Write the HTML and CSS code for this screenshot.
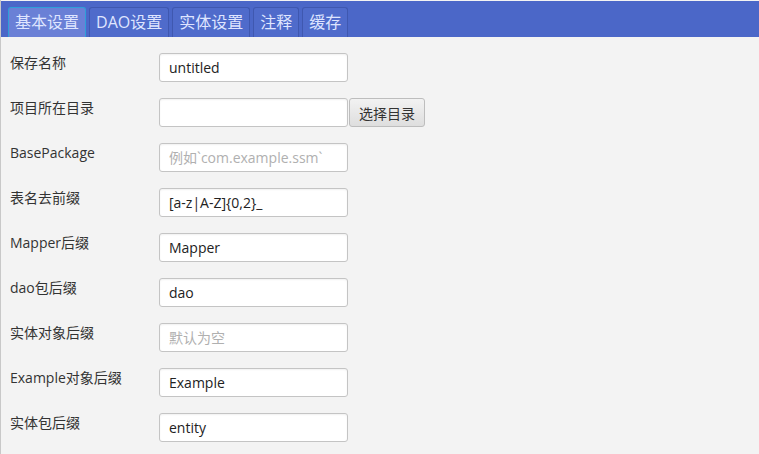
FILE: index.html
```html
<!DOCTYPE html>
<html lang="zh">
<head>
<meta charset="utf-8">
<link rel="stylesheet" href="styles.css">
</head>
<body>
<div class="app">
  <div class="tabs">
    <div class="tab active">基本设置</div>
    <div class="tab">DAO设置</div>
    <div class="tab">实体设置</div>
    <div class="tab">注释</div>
    <div class="tab">缓存</div>
  </div>
  <div class="form">
    <div class="row"><label>保存名称</label><input class="field" value="untitled"></div>
    <div class="row"><label>项目所在目录</label><input class="field" value=""><button class="btn">选择目录</button></div>
    <div class="row"><label>BasePackage</label><input class="field" placeholder="例如`com.example.ssm`"></div>
    <div class="row"><label>表名去前缀</label><input class="field" value="[a-z|A-Z]{0,2}_"></div>
    <div class="row"><label>Mapper后缀</label><input class="field" value="Mapper"></div>
    <div class="row"><label>dao包后缀</label><input class="field" value="dao"></div>
    <div class="row"><label>实体对象后缀</label><input class="field" placeholder="默认为空"></div>
    <div class="row"><label>Example对象后缀</label><input class="field" value="Example"></div>
    <div class="row"><label>实体包后缀</label><input class="field" value="entity"></div>
  </div>
</div>
</body>
</html>
```

FILE: styles.css
```css
* { box-sizing: border-box; }
html, body { margin: 0; padding: 0; }
body {
  width: 759px;
  height: 454px;
  overflow: hidden;
  background: #f3f3f3;
  font-family: "Open Sans", "Noto Sans CJK SC", sans-serif;
  color: #333;
}
.app {
  border-left: 1px solid #c8c8c8;
  height: 454px;
  padding-top: 1px;
}
.tabs {
  display: flex;
  gap: 3px;
  height: 36px;
  background: #4b67c8;
  padding: 6px 0 0 7px;
  align-items: flex-end;
}
.tab {
  height: 30px;
  padding: 0 6px;
  border: 1px solid #3f58b0;
  border-bottom: none;
  border-radius: 3px 3px 0 0;
  background: #4f6bcb;
  color: #dfe5ff;
  font-size: 16px;
  line-height: 28px;
  font-family: "Open Sans", "Noto Sans CJK SC", sans-serif;
}
.tab.active {
  background: #6a80d6;
  border: 1px solid #2f9fd8;
  border-bottom: none;
}
.form {
  padding: 16px 0 0 9px;
  display: flex;
  flex-direction: column;
  gap: 16px;
}
.row {
  display: flex;
  align-items: flex-start;
  height: 29px;
}
.row label {
  width: 149px;
  font-size: 14px;
  line-height: 18px;
  padding-top: 1px;
  color: #333;
  font-family: "Open Sans", "Noto Sans CJK SC", sans-serif;
}
.field {
  width: 189px;
  height: 29px;
  border: 1px solid #c4c4c4;
  border-radius: 3px;
  background: #fff;
  padding: 0 9px;
  font-size: 14px;
  font-family: "Open Sans", "Noto Sans CJK SC", sans-serif;
  color: #222;
  outline: none;
  box-shadow: inset 0 1px 2px rgba(0,0,0,0.06);
}
.field::placeholder { color: #b0b0b0; }
.btn {
  height: 29px;
  width: 76px;
  margin-left: 1px;
  border: 1px solid #bdbdbd;
  border-radius: 3px;
  background: linear-gradient(#f2f2f2, #dedede);
  font-size: 14px;
  font-family: "Noto Sans CJK SC", sans-serif;
  color: #333;
  padding: 0;
}
```
